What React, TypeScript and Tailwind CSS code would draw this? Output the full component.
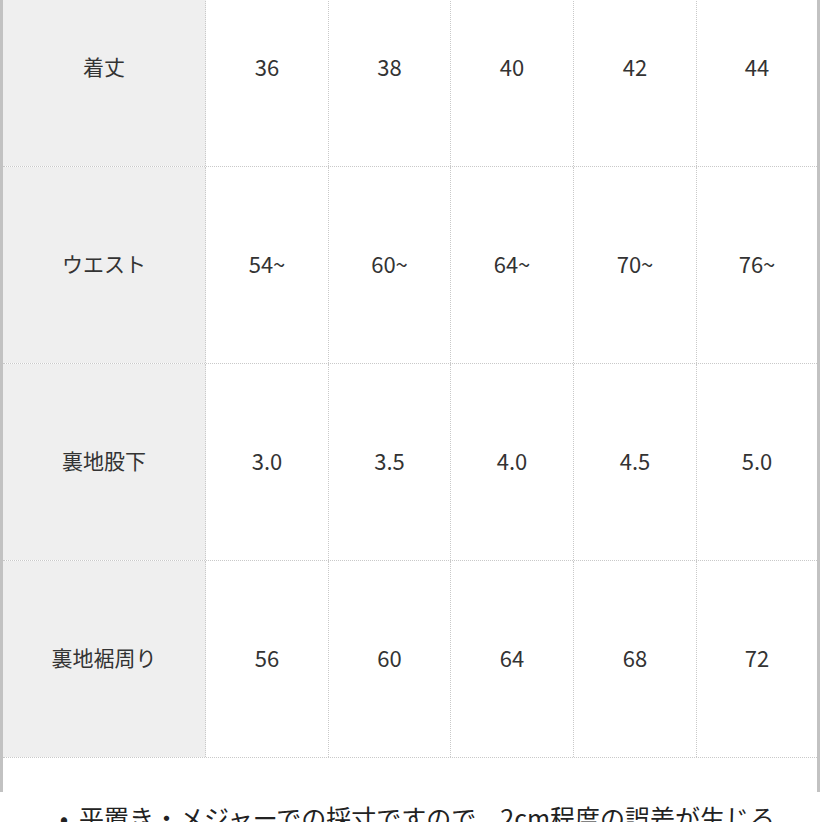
const rows: { label: string; values: string[] }[] = [
  { label: "着丈", values: ["36", "38", "40", "42", "44"] },
  { label: "ウエスト", values: ["54~", "60~", "64~", "70~", "76~"] },
  { label: "裏地股下", values: ["3.0", "3.5", "4.0", "4.5", "5.0"] },
  { label: "裏地裾周り", values: ["56", "60", "64", "68", "72"] },
];

const colWidths = ["w-[123px]", "w-[122px]", "w-[123px]", "w-[123px]", "w-[120px]"];

export default function App() {
  return (
    <div
      className="w-[822px] h-[822px] overflow-hidden bg-white text-[#333]"
      style={{ fontFamily: '"Noto Sans CJK JP", "Noto Sans", sans-serif' }}
    >
      <div className="w-[820px] h-full border-l-[3px] border-r-[3px] border-[#c2c2c2]">
        {/* size table */}
        <div className="mt-[-30px]">
          {rows.map((row) => (
            <div
              key={row.label}
              className="flex h-[197px] border-b border-dotted border-[#c9c9c9]"
            >
              <div className="w-[203px] shrink-0 bg-[#efefef] border-r border-dotted border-[#c9c9c9] flex items-center justify-center text-[21px] pb-[3px]">
                {row.label}
              </div>
              {row.values.map((v, i) => (
                <div
                  key={i}
                  className={`${colWidths[i]} shrink-0 flex items-center justify-center text-[22px] pb-[4px] ${
                    i < 4 ? "border-r border-dotted border-[#c9c9c9]" : ""
                  }`}
                >
                  {v}
                </div>
              ))}
            </div>
          ))}
        </div>

        {/* notes */}
        <div className="pt-[40px] pl-[46px] pr-[20px]">
          <div className="flex items-start text-[25px] leading-[38px] text-[#222]">
            <span className="w-[30px] shrink-0 text-center">•</span>
            <span className="whitespace-nowrap">
              平置き・メジャーでの採寸ですので、2cm程度の誤差が生じる
            </span>
          </div>
        </div>
      </div>
    </div>
  );
}
